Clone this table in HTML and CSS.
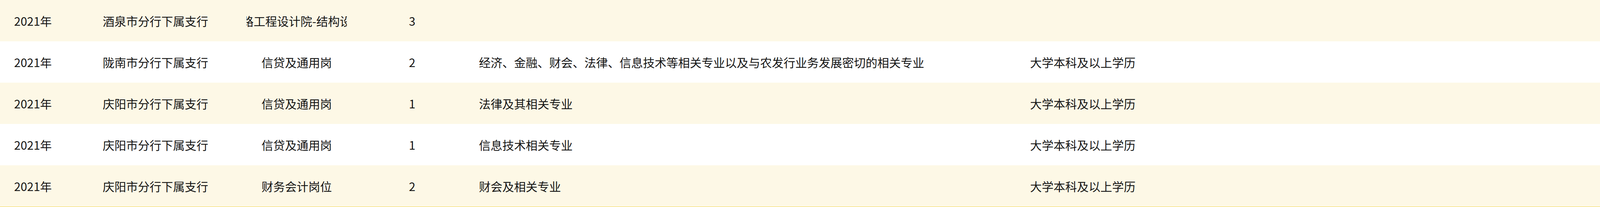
FILE: index.html
```html
<!DOCTYPE html>
<html lang="zh-CN">
<head>
<meta charset="utf-8">
<title>岗位列表</title>
<link rel="stylesheet" href="styles.css">
</head>
<body>
<div class="table">
  <div class="row odd">
    <div class="cell c1">2021年</div>
    <div class="cell c2">酒泉市分行下属支行</div>
    <div class="cell c3"><span class="clip">铁路工程设计院-结构设计</span></div>
    <div class="cell c4">3</div>
    <div class="cell c5"></div>
    <div class="cell c6"></div>
  </div>
  <div class="row">
    <div class="cell c1">2021年</div>
    <div class="cell c2">陇南市分行下属支行</div>
    <div class="cell c3"><span class="clip">信贷及通用岗</span></div>
    <div class="cell c4">2</div>
    <div class="cell c5">经济、金融、财会、法律、信息技术等相关专业以及与农发行业务发展密切的相关专业</div>
    <div class="cell c6">大学本科及以上学历</div>
  </div>
  <div class="row odd">
    <div class="cell c1">2021年</div>
    <div class="cell c2">庆阳市分行下属支行</div>
    <div class="cell c3"><span class="clip">信贷及通用岗</span></div>
    <div class="cell c4">1</div>
    <div class="cell c5">法律及其相关专业</div>
    <div class="cell c6">大学本科及以上学历</div>
  </div>
  <div class="row">
    <div class="cell c1">2021年</div>
    <div class="cell c2">庆阳市分行下属支行</div>
    <div class="cell c3"><span class="clip">信贷及通用岗</span></div>
    <div class="cell c4">1</div>
    <div class="cell c5">信息技术相关专业</div>
    <div class="cell c6">大学本科及以上学历</div>
  </div>
  <div class="row odd">
    <div class="cell c1">2021年</div>
    <div class="cell c2">庆阳市分行下属支行</div>
    <div class="cell c3"><span class="clip">财务会计岗位</span></div>
    <div class="cell c4">2</div>
    <div class="cell c5">财会及相关专业</div>
    <div class="cell c6">大学本科及以上学历</div>
  </div>
</div>
</body>
</html>
```

FILE: styles.css
```css
html, body {
  margin: 0;
  padding: 0;
  background: #ffffff;
}

body {
  font-family: "Noto Sans CJK SC", "Noto Sans", sans-serif;
  font-size: 30px;
  color: #141414;
}

.table {
  width: 5909px;
  border-bottom: 1px solid #f2d54c;
}

.row {
  display: grid;
  grid-template-columns: 263px 368px 257px 334px 1410px 1fr;
  height: 106px;
  align-items: center;
  background: #ffffff;
}

.row.odd {
  background: #fdf8e6;
}

.cell {
  white-space: nowrap;
  min-width: 0;
}

.c1 {
  padding-left: 36px;
}

.c3 {
  display: flex;
  justify-content: center;
  overflow: hidden;
}

.clip {
  flex: none;
}

.c4 {
  text-align: center;
}

.c5 {
  padding-left: 4px;
}

.c6 {
  padding-left: 5px;
}
```
